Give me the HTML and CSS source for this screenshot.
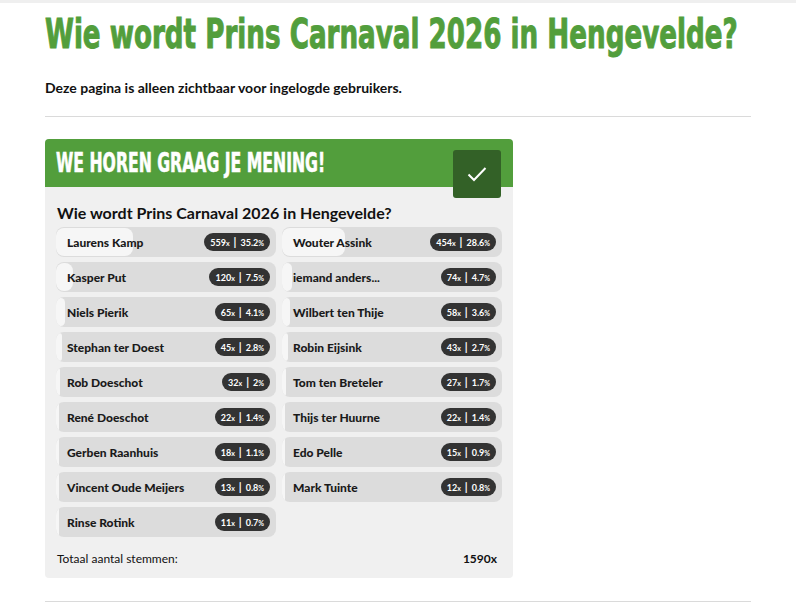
FILE: index.html
```html
<!DOCTYPE html>
<html lang="nl">
<head>
  <meta charset="UTF-8">
  <meta name="viewport" content="width=device-width, initial-scale=1.0">
  <title>Wie wordt Prins Carnaval 2026 in Hengevelde?</title>
  <link rel="stylesheet" href="styles.css">
</head>
<body>
  <div class="topstrip"></div>
  <div class="page">
    <h1 class="title"><span>Wie wordt Prins Carnaval 2026 in Hengevelde?</span></h1>
    <p class="notice">Deze pagina is alleen zichtbaar voor ingelogde gebruikers.</p>
    <hr class="line">

    <div class="poll">
      <div class="poll-head">
        <h2><span>WE HOREN GRAAG JE MENING!</span></h2>
        <div class="poll-check">
          <svg width="20" height="16" viewBox="0 0 20 16"><path d="M1.5 8.5 L7 14 L18.5 2" fill="none" stroke="#fff" stroke-width="2"/></svg>
        </div>
      </div>
      <div class="poll-body">
        <h3 class="question">Wie wordt Prins Carnaval 2026 in Hengevelde?</h3>
        <ul class="answers">
          <li><span class="fill" style="width:35.2%"></span><span class="name">Laurens Kamp</span><span class="badge">559<small>x</small><i>|</i>35.2<small>%</small></span></li>
          <li><span class="fill" style="width:28.6%"></span><span class="name">Wouter Assink</span><span class="badge">454<small>x</small><i>|</i>28.6<small>%</small></span></li>
          <li><span class="fill" style="width:7.5%"></span><span class="name">Kasper Put</span><span class="badge">120<small>x</small><i>|</i>7.5<small>%</small></span></li>
          <li><span class="fill" style="width:4.7%"></span><span class="name">iemand anders...</span><span class="badge">74<small>x</small><i>|</i>4.7<small>%</small></span></li>
          <li><span class="fill" style="width:4.1%"></span><span class="name">Niels Pierik</span><span class="badge">65<small>x</small><i>|</i>4.1<small>%</small></span></li>
          <li><span class="fill" style="width:3.6%"></span><span class="name">Wilbert ten Thije</span><span class="badge">58<small>x</small><i>|</i>3.6<small>%</small></span></li>
          <li><span class="fill" style="width:2.8%"></span><span class="name">Stephan ter Doest</span><span class="badge">45<small>x</small><i>|</i>2.8<small>%</small></span></li>
          <li><span class="fill" style="width:2.7%"></span><span class="name">Robin Eijsink</span><span class="badge">43<small>x</small><i>|</i>2.7<small>%</small></span></li>
          <li><span class="fill" style="width:2%"></span><span class="name">Rob Doeschot</span><span class="badge">32<small>x</small><i>|</i>2<small>%</small></span></li>
          <li><span class="fill" style="width:1.7%"></span><span class="name">Tom ten Breteler</span><span class="badge">27<small>x</small><i>|</i>1.7<small>%</small></span></li>
          <li><span class="fill" style="width:1.4%"></span><span class="name">René Doeschot</span><span class="badge">22<small>x</small><i>|</i>1.4<small>%</small></span></li>
          <li><span class="fill" style="width:1.4%"></span><span class="name">Thijs ter Huurne</span><span class="badge">22<small>x</small><i>|</i>1.4<small>%</small></span></li>
          <li><span class="fill" style="width:1.1%"></span><span class="name">Gerben Raanhuis</span><span class="badge">18<small>x</small><i>|</i>1.1<small>%</small></span></li>
          <li><span class="fill" style="width:0.9%"></span><span class="name">Edo Pelle</span><span class="badge">15<small>x</small><i>|</i>0.9<small>%</small></span></li>
          <li><span class="fill" style="width:0.8%"></span><span class="name">Vincent Oude Meijers</span><span class="badge">13<small>x</small><i>|</i>0.8<small>%</small></span></li>
          <li><span class="fill" style="width:0.8%"></span><span class="name">Mark Tuinte</span><span class="badge">12<small>x</small><i>|</i>0.8<small>%</small></span></li>
          <li><span class="fill" style="width:0.7%"></span><span class="name">Rinse Rotink</span><span class="badge">11<small>x</small><i>|</i>0.7<small>%</small></span></li>
        </ul>
        <div class="total">
          <span>Totaal aantal stemmen:</span>
          <b>1590x</b>
        </div>
      </div>
    </div>

    <hr class="line bottom">
  </div>
</body>
</html>
```

FILE: styles.css
```css
* {
  margin: 0;
  padding: 0;
  box-sizing: border-box;
  list-style: none;
}
body {
  background: #fff;
  color: #111;
  font-family: Lato, "Liberation Sans", sans-serif;
}
.topstrip {
  height: 3px;
  background: #efefef;
}
.page {
  width: 706px;
  margin-left: 45px;
}
/* no Oswald offline: squeeze DejaVu condensed bold to the same width */
.title {
  font-family: "DejaVu Sans", sans-serif;
  font-stretch: condensed;
  font-weight: bold;
  font-size: 41px;
  line-height: 50px;
  color: #529e3c;
  -webkit-text-stroke: 1px #529e3c;
  margin-top: 6px;
  white-space: nowrap;
  overflow: hidden;
}
.title span,
.poll-head h2 span {
  display: inline-block;
  transform-origin: left center;
}
.title span {
  transform: scaleX(0.71);
}
.notice {
  font-weight: bold;
  font-size: 14px;
  line-height: 18px;
  margin-top: 20px;
}
.line {
  border: 0;
  border-top: 1px solid #dadada;
  margin-top: 19px;
}
.line.bottom {
  margin-top: 23px;
}
.poll {
  width: 468px;
  margin-top: 22px;
  background: #f0f0f0;
  border-radius: 4px;
}
.poll-head {
  height: 48px;
  background: #529e3c;
  border-radius: 4px 4px 0 0;
  display: flex;
  justify-content: space-between;
  padding: 0 12px 0 11px;
}
.poll-head h2 {
  flex: 1;
  min-width: 0;
  font-family: "DejaVu Sans", sans-serif;
  font-stretch: condensed;
  font-weight: bold;
  font-size: 26px;
  line-height: 48px;
  color: #fff;
  -webkit-text-stroke: 0.6px #fff;
  white-space: nowrap;
}
.poll-head h2 span {
  transform: scaleX(0.67);
}
.poll-check {
  flex-shrink: 0;
  width: 48px;
  height: 48px;
  margin-top: 11px;
  background: #336127;
  border-radius: 3px;
  display: flex;
  align-items: center;
  justify-content: center;
  position: relative;
}
.poll-body {
  padding: 15px 11px 12px 11px;
}
.question {
  font-size: 16px;
  font-weight: bold;
  line-height: 22px;
  margin-left: 1px;
  margin-bottom: 3px;
  color: #111;
}
.answers {
  display: grid;
  grid-template-columns: 220px 220px;
  column-gap: 6px;
  row-gap: 5px;
}
.answers li {
  position: relative;
  height: 30px;
  background: #dcdcdc;
  border-radius: 8px;
  display: flex;
  align-items: center;
  justify-content: space-between;
  padding: 0 6px 0 11px;
  overflow: hidden;
}
.answers .fill {
  position: absolute;
  left: 0;
  top: 1px;
  bottom: 1px;
  min-width: 3px;
  background: #f6f6f6;
  border-radius: 8px;
}
.answers .name {
  position: relative;
  font-size: 12px;
  font-weight: 900;
  color: #1a1a1a;
}
.badge {
  position: relative;
  height: 18px;
  line-height: 18px;
  padding: 0 6px;
  border-radius: 9px;
  background: #333;
  color: #fff;
  font-size: 9px;
  font-weight: bold;
}
.badge small {
  font-size: 7px;
}
.badge i {
  font-style: normal;
  font-size: 11px;
  margin: 0 4px;
}
.total {
  display: flex;
  justify-content: space-between;
  font-size: 12px;
  margin-top: 14px;
  padding: 0 5px 0 1px;
}
.total b {
  font-weight: bold;
}
```
